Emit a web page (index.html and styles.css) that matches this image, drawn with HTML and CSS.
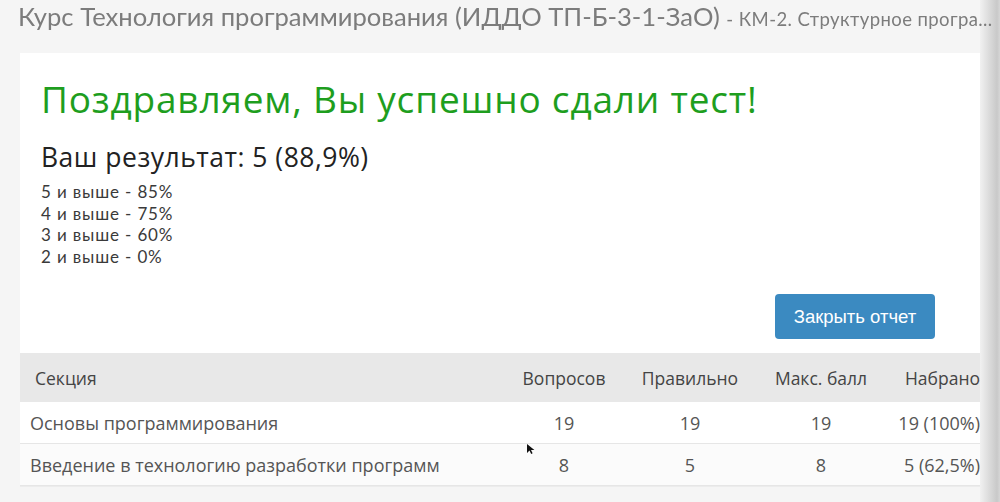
FILE: index.html
```
<!DOCTYPE html>
<html lang="ru">
<head>
<meta charset="utf-8">
<title>Результат теста</title>
<link rel="stylesheet" href="styles.css">
</head>
<body>
<div class="page">
  <header class="course-title">Курс Технология программирования (ИДДО ТП-Б-3-1-ЗаО) <small>- КМ-2. Структурное програ...</small></header>
  <main class="card">
    <h1 class="congrats">Поздравляем, Вы успешно сдали тест!</h1>
    <h2 class="result">Ваш результат: 5 (88,9%)</h2>
    <ul class="grades">
      <li>5 и выше - 85%</li>
      <li>4 и выше - 75%</li>
      <li>3 и выше - 60%</li>
      <li>2 и выше - 0%</li>
    </ul>
    <div class="actions">
      <button class="btn-close" type="button">Закрыть отчет</button>
    </div>
    <table class="report">
      <colgroup>
        <col class="w-sec">
        <col class="w-q">
        <col class="w-r">
        <col class="w-m">
        <col class="w-s">
      </colgroup>
      <thead>
        <tr>
          <th class="c-sec">Секция</th>
          <th class="c-num">Вопросов</th>
          <th class="c-num">Правильно</th>
          <th class="c-num">Макс. балл</th>
          <th class="c-end">Набрано</th>
        </tr>
      </thead>
      <tbody>
        <tr>
          <td class="c-sec">Основы программирования</td>
          <td class="c-num">19</td>
          <td class="c-num">19</td>
          <td class="c-num">19</td>
          <td class="c-end">19 (100%)</td>
        </tr>
        <tr class="alt">
          <td class="c-sec">Введение в технологию разработки программ</td>
          <td class="c-num">8</td>
          <td class="c-num">5</td>
          <td class="c-num">8</td>
          <td class="c-end">5 (62,5%)</td>
        </tr>
      </tbody>
    </table>
  </main>
</div>
<div class="edge-shade"></div>
<svg class="cursor" width="10" height="12" viewBox="0 0 10 12"><path d="M1 1 L1 10 L3.5 7.6 L5.2 11 L6.6 10.3 L5 7 L8.4 7 Z" fill="#111"/></svg>
</body>
</html>
```
FILE: styles.css
```
html, body {
  margin: 0;
  padding: 0;
}
body {
  background: #f5f5f5;
  width: 1000px;
  height: 502px;
  overflow: hidden;
  font-family: "Open Sans", "Noto Sans", sans-serif;
}
.page {
  display: flex;
  flex-direction: column;
}
.course-title {
  position: relative;
  z-index: 2;
  box-sizing: border-box;
  height: 53px;
  padding: 1px 0 0 18px;
  font-family: Lato, "Noto Sans", sans-serif;
  font-size: 25.6px;
  line-height: 31px;
  color: #7c7c7c;
  white-space: nowrap;
}
.course-title small {
  font-size: 18.5px;
  letter-spacing: 0.4px;
  color: #7c7c7c;
}
.card {
  margin-left: 20px;
  width: 960px;
  background: #fff;
  padding-top: 24px;
  border-bottom: 1px solid #ececec;
}
.congrats {
  margin: 0 0 0 21px;
  font-weight: 400;
  font-size: 37px;
  letter-spacing: 0.8px;
  line-height: 44px;
  color: #1e9e1e;
}
.result {
  margin: 20px 0 0 21px;
  font-weight: 400;
  font-size: 26.5px;
  letter-spacing: 0.5px;
  line-height: 32px;
  color: #222;
}
.grades {
  list-style: none;
  margin: 8px 0 0 21px;
  padding: 0;
  font-family: Lato, "Noto Sans", sans-serif;
  font-size: 17px;
  letter-spacing: 0.85px;
  line-height: 21.5px;
  color: #3a3a3a;
}
.actions {
  display: flex;
  justify-content: flex-end;
  padding: 27px 45px 0 0;
}
.btn-close {
  width: 160px;
  height: 45px;
  border: none;
  border-radius: 4px;
  background: #3b8ac1;
  color: #fff;
  font-family: "Liberation Sans", Arial, sans-serif;
  font-size: 18.5px;
  padding: 0;
}
.report {
  margin-top: 14px;
  width: 960px;
  border-collapse: collapse;
  table-layout: fixed;
  font-size: 18px;
}
.w-sec { width: 480px; }
.w-q { width: 128px; }
.w-r { width: 124px; }
.w-m { width: 138px; }
.w-s { width: 90px; }
.report th {
  background: #e8e8e8;
  height: 49px;
  font-weight: 400;
  font-size: 17.5px;
  color: #444;
  padding: 0;
  white-space: nowrap;
}
.report td {
  color: #555;
  height: 41px;
  padding: 0;
  border-bottom: 1px solid #e6e6e6;
  white-space: nowrap;
}
.report tr.alt td {
  background: #fbfbfb;
}
.report th.c-sec {
  text-align: left;
  padding-left: 15px;
}
.report td.c-sec {
  text-align: left;
  padding-left: 10px;
}
.c-num { text-align: center; }
.c-end { text-align: right; }
.edge-shade {
  position: fixed;
  top: 0;
  right: 0;
  width: 20px;
  height: 502px;
  background: linear-gradient(to right, #f1f1f1 0%, #dedede 40%, #c9c9c9 85%, #d6d6d6 100%);
}
.cursor {
  position: fixed;
  left: 526px;
  top: 443px;
}
```
